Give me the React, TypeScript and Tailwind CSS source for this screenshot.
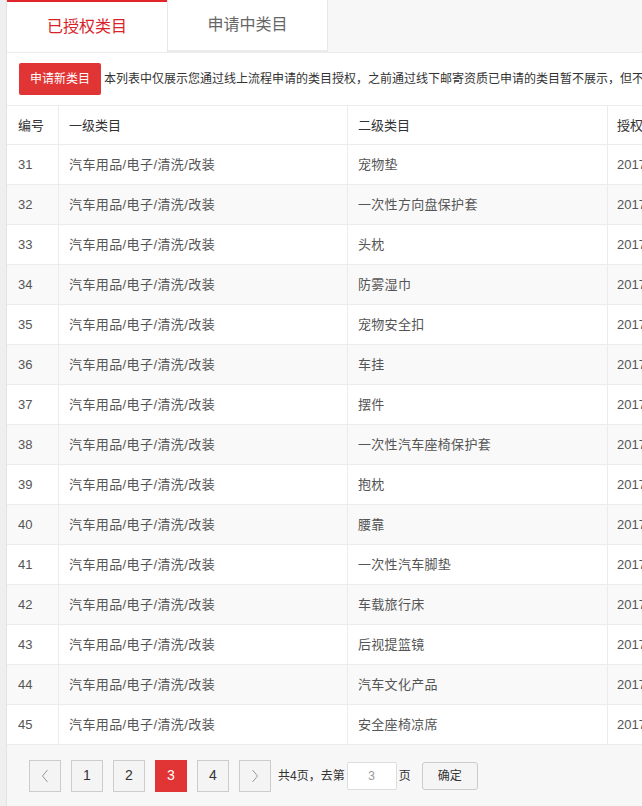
import React from "react";

const rows: [number, string][] = [
  [31, "宠物垫"],
  [32, "一次性方向盘保护套"],
  [33, "头枕"],
  [34, "防雾湿巾"],
  [35, "宠物安全扣"],
  [36, "车挂"],
  [37, "摆件"],
  [38, "一次性汽车座椅保护套"],
  [39, "抱枕"],
  [40, "腰靠"],
  [41, "一次性汽车脚垫"],
  [42, "车载旅行床"],
  [43, "后视提篮镜"],
  [44, "汽车文化产品"],
  [45, "安全座椅凉席"],
];

const Chevron = ({ dir }: { dir: "left" | "right" }) => (
  <svg width="8" height="14" viewBox="0 0 8 14" fill="none">
    <polyline
      points={dir === "left" ? "6.5,1 1.5,7 6.5,13" : "1.5,1 6.5,7 1.5,13"}
      stroke="#999"
      strokeWidth="1"
    />
  </svg>
);

const PageBtn = ({
  children,
  active,
}: {
  children: React.ReactNode;
  active?: boolean;
}) => (
  <div
    className={
      active
        ? "w-[32px] h-[32px] flex items-center justify-center bg-[#e13535] border border-[#e13535] text-white text-[14px]"
        : "w-[32px] h-[32px] flex items-center justify-center bg-[#f4f4f4] border border-[#cccccc] text-[#333] text-[14px]"
    }
  >
    {children}
  </div>
);

export default function App() {
  return (
    <div className="w-[642px] h-[806px] overflow-hidden flex bg-[#f7f7f7] font-['Liberation_Sans','Noto_Sans_CJK_SC',sans-serif]">
      <div className="w-[6px] shrink-0 bg-[#efefef]" />
      <div className="flex flex-col shrink-0 w-[1000px] border-l border-[#e3e3e3]">
        {/* tabs */}
        <div className="flex h-[52px] shrink-0">
          <div className="w-[160px] bg-white border-t-2 border-[#e0262b] flex items-center justify-center text-[16px] text-[#d9232a] leading-none">
            已授权类目
          </div>
          <div className="w-[161px] bg-white border-l border-r border-[#e8e8e8] border-b-2 border-b-[#ebebeb] flex items-center justify-center text-[16px] text-[#666] leading-none">
            申请中类目
          </div>
          <div className="flex-1" />
        </div>

        {/* panel */}
        <div className="bg-white border-t border-[#ececec] flex flex-col">
          <div className="h-[52px] flex items-center px-[12px]">
            <button className="w-[82px] h-[32px] rounded-[2px] bg-[#e13535] text-white text-[12px] leading-none">
              申请新类目
            </button>
            <span className="ml-[3px] text-[12px] text-[#333] whitespace-nowrap leading-none">
              本列表中仅展示您通过线上流程申请的类目授权，之前通过线下邮寄资质已申请的类目暂不展示，但不影响您正常发布商品。
            </span>
          </div>

          <div className="border-t border-[#ececec]">
            <div className="flex h-[38px] text-[13px] text-[#333] leading-none">
              <div className="w-[51px] px-[11px] flex items-center">编号</div>
              <div className="w-[289px] px-[10px] flex items-center border-l border-[#ececec]">一级类目</div>
              <div className="w-[260px] px-[10px] flex items-center border-l border-[#ececec]">二级类目</div>
              <div className="w-[180px] px-[9px] flex items-center border-l border-[#ececec]">授权时间</div>
              <div className="flex-1 px-[9px] flex items-center border-l border-[#ececec]">状态</div>
            </div>
            {rows.map(([no, name], i) => (
              <div
                key={no}
                className={
                  i % 2 === 1
                    ? "flex h-[40px] text-[13px] text-[#555] leading-none border-t border-[#ececec] bg-[#f9f9f9]"
                    : "flex h-[40px] text-[13px] text-[#555] leading-none border-t border-[#ececec] bg-white"
                }
              >
                <div className="w-[51px] px-[11px] flex items-center">{no}</div>
                <div className="w-[289px] px-[10px] flex items-center border-l border-[#ececec] tracking-[0.4px]">
                  汽车用品/电子/清洗/改装
                </div>
                <div className="w-[260px] px-[10px] flex items-center border-l border-[#ececec] tracking-[0.3px]">{name}</div>
                <div className="w-[180px] px-[9px] flex items-center border-l border-[#ececec]">
                  2017-06-15 10:23:41
                </div>
                <div className="flex-1 px-[9px] flex items-center border-l border-[#ececec]">已授权</div>
              </div>
            ))}
          </div>
        </div>

        {/* pagination */}
        <div className="h-[62px] shrink-0 bg-[#f7f7f7] border-t border-[#ececec] flex items-center pl-[22px] gap-[10px]">
          <PageBtn>
            <Chevron dir="left" />
          </PageBtn>
          <PageBtn>1</PageBtn>
          <PageBtn>2</PageBtn>
          <PageBtn active>3</PageBtn>
          <PageBtn>4</PageBtn>
          <PageBtn>
            <Chevron dir="right" />
          </PageBtn>
          <div className="flex items-center text-[12px] text-[#333] leading-none -ml-[3px]">
            <span>共4页，去第</span>
            <div className="ml-[2px] w-[50px] h-[28px] bg-white border border-[#dddddd] rounded-[2px] flex items-center justify-center text-[#999]">
              3
            </div>
            <span className="ml-[2px]">页</span>
            <button className="ml-[11px] w-[56px] h-[28px] bg-[#f5f5f5] border border-[#cccccc] rounded-[3px] text-[12px] text-[#333]">
              确定
            </button>
          </div>
        </div>
      </div>
    </div>
  );
}
